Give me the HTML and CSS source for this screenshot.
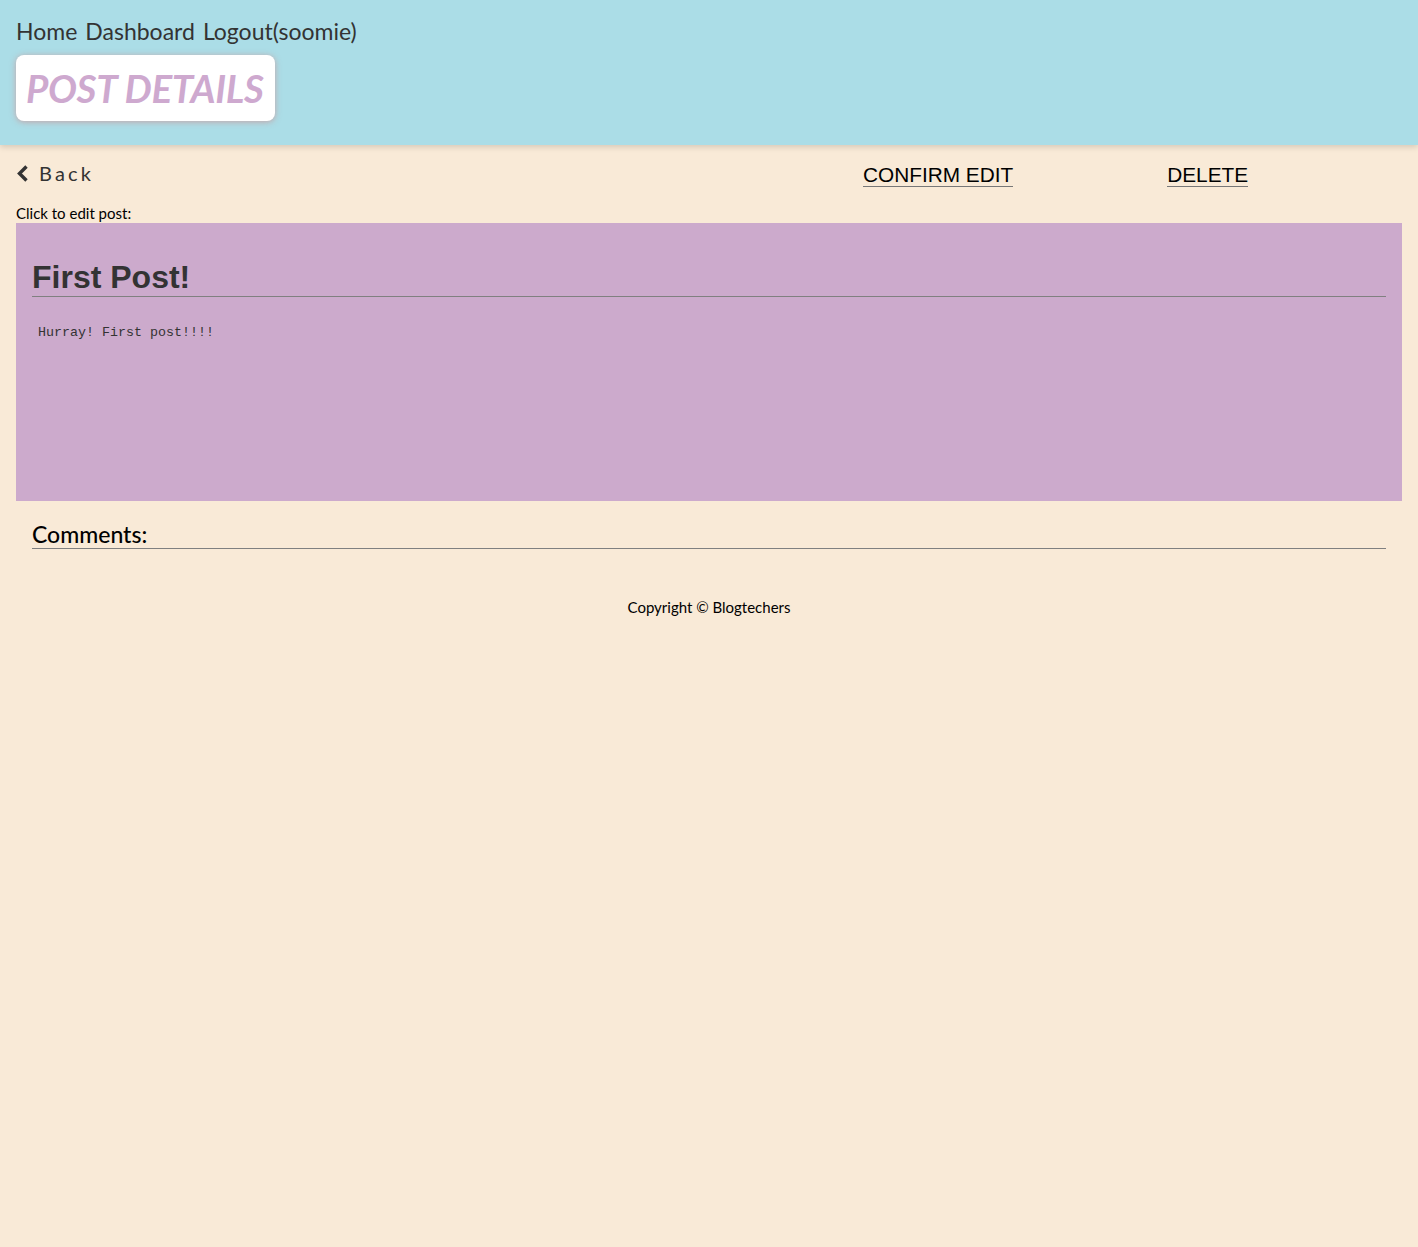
FILE: index.html
```html
<!DOCTYPE html>
<html>
<head>
<meta charset="utf-8">
<link rel="stylesheet" href="styles.css">
</head>
<body>
<header class="header">
  <nav class="nav">
    <a class="nav-link">Home</a>
    <a class="nav-link">Dashboard</a>
    <a class="nav-link">Logout(soomie)</a>
  </nav>
  <div class="title-box"><h1 class="title">POST DETAILS</h1></div>
</header>
<main class="main">
  <div class="toolbar">
    <a class="back"><svg class="chev" width="13" height="17" viewBox="0 0 13 17"><path d="M10.5 1.5 L3.5 8.5 L10.5 15.5" fill="none" stroke="#333" stroke-width="3.4"/></svg><span class="back-text">Back</span></a>
    <a class="action confirm">CONFIRM EDIT</a>
    <a class="action delete">DELETE</a>
  </div>
  <div class="hint">Click to edit post:</div>
  <section class="post">
    <h2 class="post-title">First Post!</h2>
    <pre class="post-body">Hurray! First post!!!!</pre>
  </section>
  <section class="comments">
    <h3 class="comments-title">Comments:</h3>
  </section>
  <footer class="footer">Copyright © Blogtechers</footer>
</main>
</body>
</html>
```
FILE: styles.css
```css
html, body {
  margin: 0;
  padding: 0;
}
body {
  background: #f9ead7;
  font-family: "Lato", "Open Sans", sans-serif;
  color: #000;
  min-height: 1247px;
}
.header {
  background: #abdde7;
  height: 145px;
  box-sizing: border-box;
  padding: 16px 16px 0;
  box-shadow: 0 2px 6px rgba(0,0,0,0.15);
}
.nav {
  display: flex;
  gap: 8px;
  font-size: 23px;
  line-height: 30px;
  color: #333;
}
.title-box {
  display: inline-block;
  background: #fff;
  border-radius: 8px;
  margin-top: 9px;
  width: 259px;
  height: 66px;
  box-sizing: border-box;
  padding-left: 10px;
  box-shadow: 0 1px 6px rgba(210,140,140,0.7);
}
.title {
  margin: 0;
  font-size: 38.5px;
  line-height: 66px;
  font-style: italic;
  font-weight: 700;
  color: #cea9cf;
  letter-spacing: -0.3px;
}
.main {
  padding: 0 16px;
}
.toolbar {
  display: flex;
  align-items: center;
  height: 56px;
  box-sizing: border-box;
}
.back {
  display: flex;
  align-items: center;
  gap: 10px;
  width: 847px;
  color: #333;
  font-size: 20px;
  letter-spacing: 3.2px;
}
.action {
  font-family: "Liberation Sans", Arial, sans-serif;
  font-size: 20.8px;
  line-height: 23px;
  padding-top: 3px;
  color: #000;
  border-bottom: 1px solid #777;
}
.confirm {
  margin-right: 154px;
}
.hint {
  font-size: 15px;
  line-height: 15px;
  margin-top: 5px;
  padding-bottom: 2px;
}
.post {
  background: #ccaacc;
  height: 278px;
  padding: 35px 16px 0;
  box-sizing: border-box;
}
.post-title {
  margin: 0;
  font-family: "Liberation Sans", Arial, sans-serif;
  font-size: 32px;
  line-height: 38px;
  color: #333;
  border-bottom: 1px solid #808080;
}
.post-body {
  margin: 28px 0 0 6px;
  font-family: "Liberation Mono", "Courier New", monospace;
  font-size: 13.33px;
  color: #333;
}
.comments {
  padding: 19px 16px 0;
}
.comments-title {
  margin: 0;
  font-size: 23px;
  font-weight: 500;
  line-height: 28px;
  border-bottom: 1px solid #808080;
}
.footer {
  text-align: center;
  font-size: 15px;
  margin-top: 49px;
}
```
